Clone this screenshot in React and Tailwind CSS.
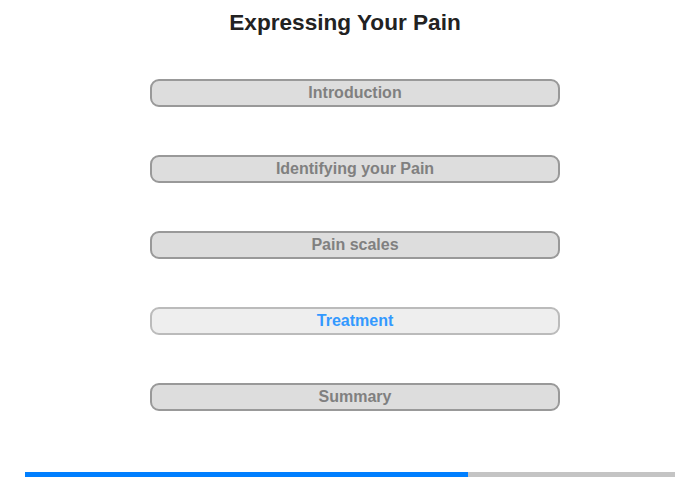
export default function App() {
  const items = [
    { label: "Introduction", active: false },
    { label: "Identifying your Pain", active: false },
    { label: "Pain scales", active: false },
    { label: "Treatment", active: true },
    { label: "Summary", active: false },
  ];
  return (
    <div
      className="w-[700px] h-[480px] bg-white flex flex-col"
      style={{ fontFamily: '"Liberation Sans", Arial, sans-serif' }}
    >
      <div className="w-[690px] pt-[10px] text-center text-[22.6px] leading-[26px] font-bold text-[#222222]">
        Expressing Your Pain
      </div>
      <div className="mt-[43px] pl-[150px] flex flex-col gap-[48px]">
        {items.map((it) => (
          <div
            key={it.label}
            className={
              it.active
                ? "w-[410px] h-[28px] rounded-[9px] border-2 border-[#bbbbbb] bg-[#eeeeee] flex items-center justify-center text-[16px] font-bold text-[#3399ff]"
                : "w-[410px] h-[28px] rounded-[9px] border-2 border-[#999999] bg-[#dddddd] flex items-center justify-center text-[16px] font-bold text-[#808080]"
            }
          >
            {it.label}
          </div>
        ))}
      </div>
      <div className="mt-[61px] ml-[25px] w-[650px] h-[5px] flex">
        <div className="w-[443px] h-full bg-[#007fff]" />
        <div className="flex-1 h-full bg-[#c4c4c4]" />
      </div>
    </div>
  );
}
